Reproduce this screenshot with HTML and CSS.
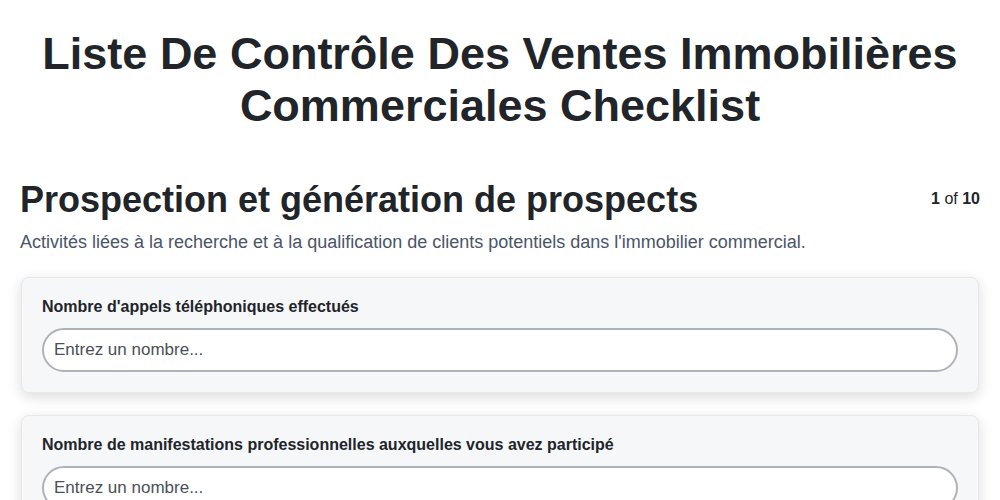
FILE: index.html
```html
<!DOCTYPE html>
<html lang="fr">
<head>
    <meta charset="UTF-8">
    <meta name="viewport" content="width=device-width, initial-scale=1.0">
    <title>Checklist</title>
    <link rel="stylesheet" href="styles.css">
</head>
<body>
    <div class="page">
        <h1 class="page-title">Liste De Contrôle Des Ventes Immobilières Commerciales Checklist</h1>

        <section class="section">
            <div class="section-header">
                <h2 class="section-title">Prospection et génération de prospects</h2>
                <div class="section-count"><strong>1</strong> of <strong>10</strong></div>
            </div>
            <p class="section-desc">Activités liées à la recherche et à la qualification de clients potentiels dans l'immobilier commercial.</p>

            <div class="question-card">
                <label class="question-label" for="q1">Nombre d'appels téléphoniques effectués</label>
                <input class="question-input" type="text" id="q1" placeholder="Entrez un nombre...">
            </div>

            <div class="question-card">
                <label class="question-label" for="q2">Nombre de manifestations professionnelles auxquelles vous avez participé</label>
                <input class="question-input" type="text" id="q2" placeholder="Entrez un nombre...">
            </div>
        </section>
    </div>
</body>
</html>
```

FILE: styles.css
```css
body, html {
    margin: 0;
    padding: 0;
    background: #ffffff;
    color: #212529;
    font-family: "Liberation Sans", Arial, sans-serif;
}

.page {
    padding: 28px 20px 20px;
}

.page-title {
    margin: 0 auto;
    max-width: 940px;
    text-align: center;
    font-size: 45px;
    line-height: 52px;
    font-weight: 700;
}

.section {
    margin-top: 46px;
}

.section-header {
    display: flex;
    justify-content: space-between;
    align-items: flex-start;
}

.section-title {
    margin: 0;
    font-size: 36px;
    line-height: 44px;
    font-weight: 700;
}

.section-count {
    padding-top: 12px;
    font-size: 16px;
    line-height: 18px;
    color: #212529;
}

.section-desc {
    margin: 8px 0 23px;
    font-size: 18px;
    line-height: 24px;
    color: #4a5568;
}

.question-card {
    display: flex;
    flex-direction: column;
    gap: 12px;
    padding: 20px;
    margin: 0 1px 22px;
    background: #f6f7f9;
    border: 1px solid #e6e8eb;
    border-radius: 8px;
    box-shadow: 0 4px 14px rgba(0, 0, 0, 0.14);
}

.question-label {
    font-size: 16px;
    line-height: 18px;
    font-weight: 700;
    color: #212529;
}

.question-input {
    height: 44px;
    padding: 0 10px;
    border: 2px solid #adb3ba;
    border-radius: 22px;
    background: #ffffff;
    font-family: inherit;
    font-size: 17px;
    color: #212529;
    box-sizing: border-box;
}

.question-input::placeholder {
    color: #495057;
}
```
